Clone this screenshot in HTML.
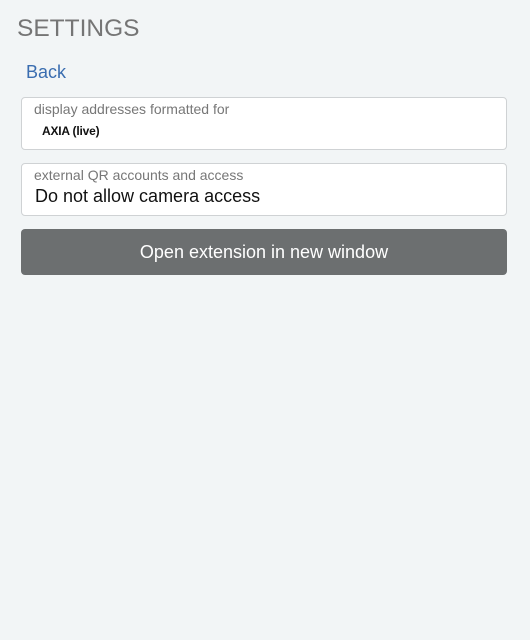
<!DOCTYPE html>
<html><head><style>
body{margin:0;width:530px;height:640px;background:#f2f5f6;font-family:"Liberation Sans",sans-serif;position:relative;overflow:hidden}
.a{position:absolute;white-space:nowrap}
.box{position:absolute;left:21px;width:484px;height:51px;background:#fff;border:1px solid #cfd2d4;border-radius:4px}
</style></head><body>
<div class="a" style="left:17px;top:15px;font-size:24.5px;color:#757575">SETTINGS</div>
<div class="a" style="left:26px;top:62px;font-size:18px;color:#3a6db0">Back</div>
<div class="box" style="top:97px"></div>
<div class="a" style="left:34px;top:101px;font-size:14px;color:#777">display addresses formatted for</div>
<div class="a" style="left:42px;top:124px;font-size:12px;color:#111;font-weight:bold;letter-spacing:-0.2px">AXIA (live)</div>
<div class="box" style="top:163px"></div>
<div class="a" style="left:34px;top:167px;font-size:14px;color:#777">external QR accounts and access</div>
<div class="a" style="left:35px;top:186px;font-size:18px;color:#111">Do not allow camera access</div>
<div class="a" style="left:21px;top:229px;width:486px;height:46px;background:#6c6f70;border-radius:4px;color:#fff;font-size:18px;text-align:center;line-height:46px">Open extension in new window</div>
</body></html>
